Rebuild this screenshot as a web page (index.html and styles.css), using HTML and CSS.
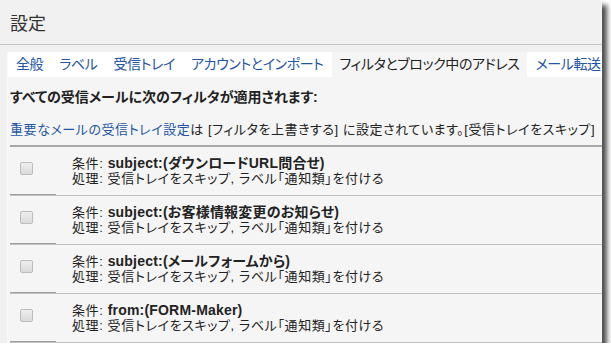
FILE: index.html
```html
<!DOCTYPE html>
<html lang="ja">
<head>
    <meta charset="UTF-8">
    <meta name="viewport" content="width=device-width, initial-scale=1.0">
    <title>設定</title>
    <link rel="stylesheet" href="styles.css">
</head>
<body>
    <div class="window">
        <!-- Title -->
        <div class="title-bar">
            <h1>設定</h1>
        </div>

        <div class="main">
            <div class="panel">
                <!-- Tabs -->
                <ul class="tabs">
                    <li><a href="#">全般</a></li>
                    <li><a href="#">ラベル</a></li>
                    <li><a href="#">受信トレイ</a></li>
                    <li><a href="#">アカウントとインポート</a></li>
                    <li class="active">フィルタとブロック中のアドレス</li>
                    <li><a href="#">メール転送</a></li>
                </ul>

                <div class="content">
                    <p class="lead">すべての受信メールに次のフィルタが適用されます:</p>
                    <p class="note"><a href="#">重要なメールの受信トレイ設定</a>は [フィルタを上書きする] に設定されています。[受信トレイをスキップ]</p>

                    <!-- Filter list -->
                    <ul class="filters">
                        <li class="filter-row">
                            <span class="check"></span>
                            <div class="desc">
                                <div>条件: <b>subject:(ダウンロードURL問合せ)</b></div>
                                <div>処理: 受信トレイをスキップ, ラベル「通知類」を付ける</div>
                            </div>
                        </li>
                        <li class="filter-row">
                            <span class="check"></span>
                            <div class="desc">
                                <div>条件: <b>subject:(お客様情報変更のお知らせ)</b></div>
                                <div>処理: 受信トレイをスキップ, ラベル「通知類」を付ける</div>
                            </div>
                        </li>
                        <li class="filter-row">
                            <span class="check"></span>
                            <div class="desc">
                                <div>条件: <b>subject:(メールフォームから)</b></div>
                                <div>処理: 受信トレイをスキップ, ラベル「通知類」を付ける</div>
                            </div>
                        </li>
                        <li class="filter-row">
                            <span class="check"></span>
                            <div class="desc">
                                <div>条件: <b>from:(FORM-Maker)</b></div>
                                <div>処理: 受信トレイをスキップ, ラベル「通知類」を付ける</div>
                            </div>
                        </li>
                    </ul>
                </div>
            </div>
        </div>
    </div>
</body>
</html>
```

FILE: styles.css
```css
body {
    margin: 0;
    padding: 0;
    background-color: #fff;
    font-family: "Liberation Sans", "Noto Sans CJK JP", sans-serif;
    font-feature-settings: "palt" 1;
    color: #222;
}

.window {
    width: 602px;
    height: 343px;
    overflow: hidden;
    background-color: #f0f0f0;
    box-shadow: 5px 5px 5px rgba(0, 0, 0, 0.7);
}

.title-bar {
    height: 44px;
    display: flex;
    align-items: center;
    padding-left: 10px;
    border-bottom: 1px solid #c4c4c4;
    background-color: #f1f1f1;
}

.title-bar h1 {
    margin: 0;
    font-size: 18px;
    font-weight: normal;
    color: #333;
}

.main {
    padding: 7px 0 0 7px;
}

.panel {
    border-left: 1px solid #fafafa;
    background-color: #f5f5f5;
    height: 300px;
}

a {
    color: #2355a6;
    text-decoration: none;
}

.tabs {
    display: flex;
    margin: 0;
    padding: 0;
    list-style: none;
    background-color: #fff;
    white-space: nowrap;
    overflow: hidden;
}

.tabs li {
    padding: 0 8px;
    font-size: 14px;
    line-height: 25px;
    letter-spacing: -0.4px;
}

.tabs li.active {
    background-color: #f5f5f5;
    color: #222;
}

.content {
    padding-left: 2px;
}

.lead {
    margin: 0;
    padding-top: 10px;
    font-size: 14px;
    font-weight: bold;
    line-height: 20px;
}

.note {
    margin: 13px 0 0;
    font-size: 13px;
    line-height: 20px;
    letter-spacing: 0.55px;
    white-space: nowrap;
    overflow: hidden;
}

.filters {
    list-style: none;
    margin: 5px 0 0;
    padding: 0;
    border-top: 2px solid #a9a9a9;
}

.filter-row {
    display: flex;
    align-items: flex-start;
    padding: 8px 0;
    font-size: 13px;
    line-height: 16px;
    border-bottom: 1px solid #c2c2c2;
    background: linear-gradient(#9c9c9c, #9c9c9c) no-repeat left bottom / 46px 1px;
}

.check {
    width: 11px;
    height: 11px;
    margin: 7px 0 0 10px;
    border: 1px solid #bcbcbc;
    border-radius: 2px;
    background: linear-gradient(#eeeeee, #dadada);
    flex-shrink: 0;
}

.desc {
    margin-left: 39px;
    white-space: nowrap;
    letter-spacing: 0.6px;
}

.desc > div {
    height: 16px;
}

.desc b {
    font-size: 14px;
    font-weight: bold;
    letter-spacing: 0.2px;
}
```
